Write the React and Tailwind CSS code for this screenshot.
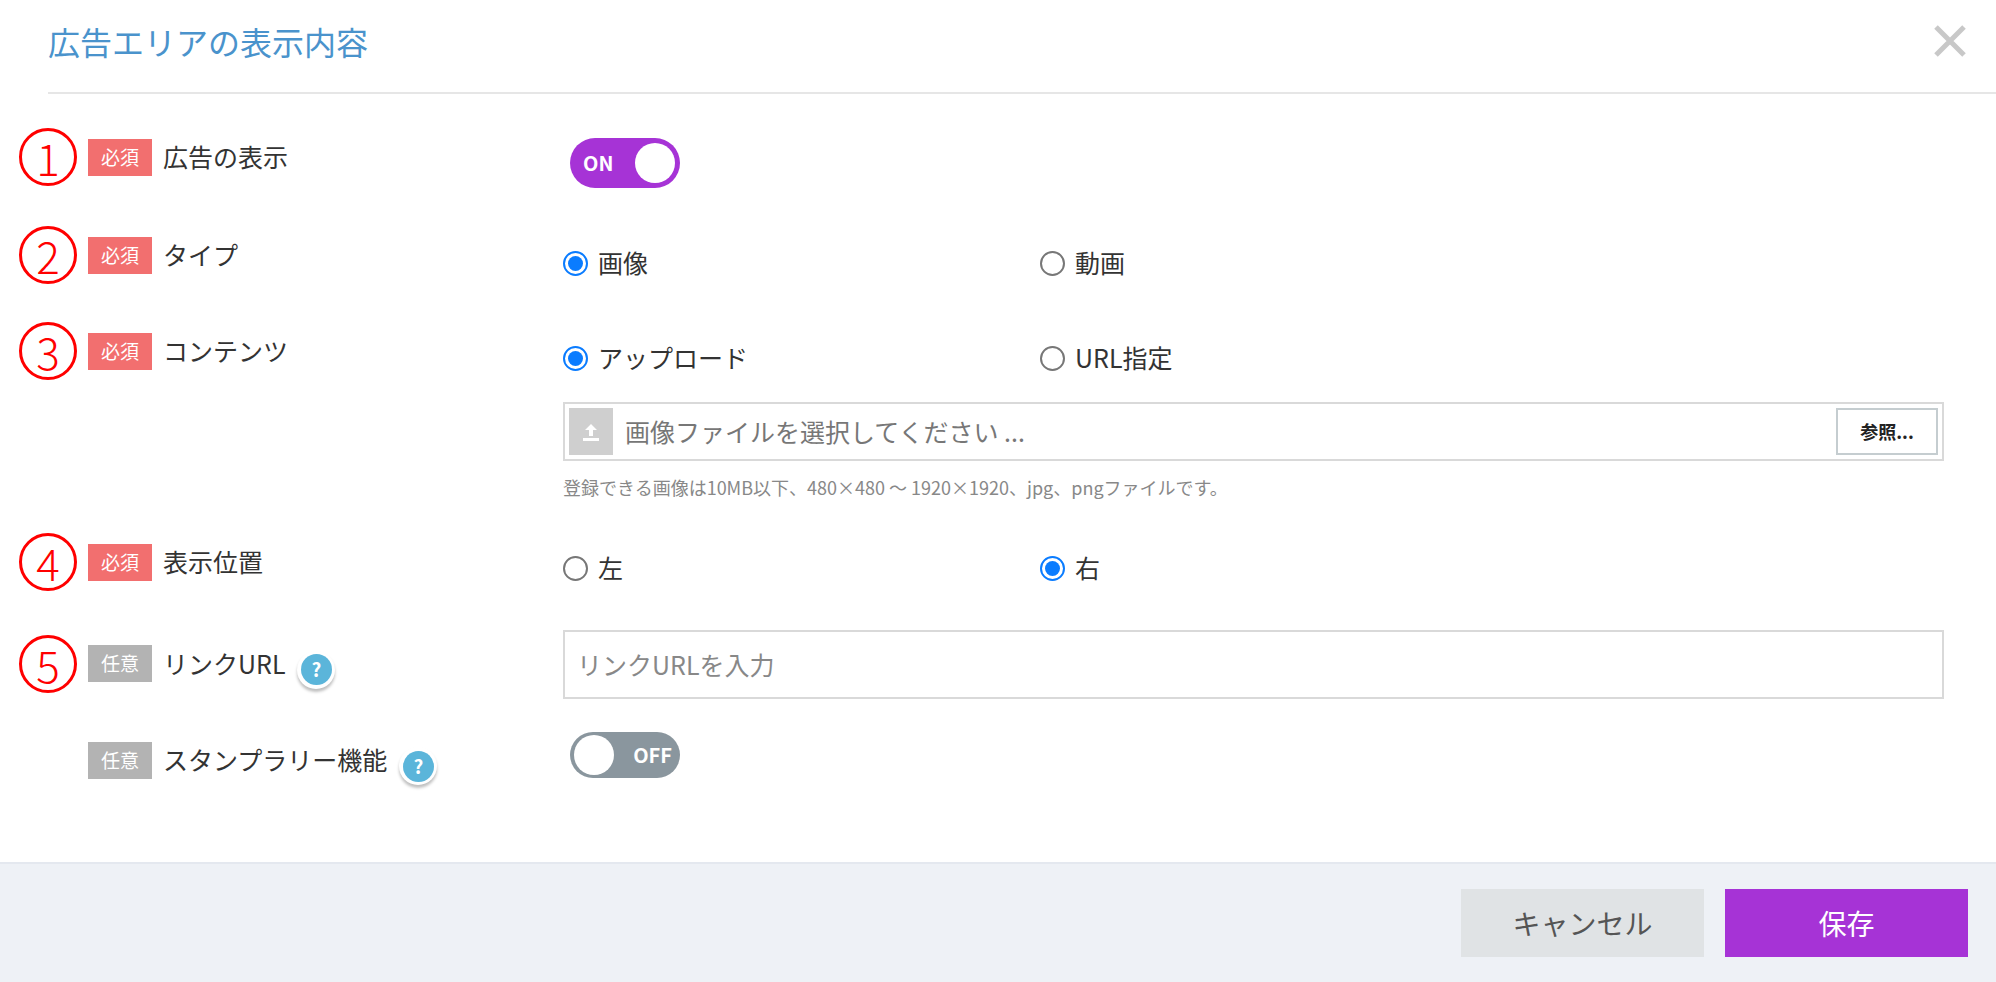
import React from "react";

const F = { fontFamily: '"Noto Sans CJK JP", "Noto Sans", sans-serif' };

function Num({ n }) {
  return (
    <div className="w-[58px] h-[58px] rounded-full border-[3px] border-[#ff0000] text-[#ff0000] flex items-center justify-center text-[44px] leading-none font-light shrink-0">
      {n}
    </div>
  );
}
function Badge({ req }) {
  return (
    <span className={`w-[64px] h-[37px] flex items-center justify-center text-white text-[19px] shrink-0 ${req ? "bg-[#f26f6f]" : "bg-[#b3b3b3]"}`}>
      {req ? "必須" : "任意"}
    </span>
  );
}
function Help() {
  return (
    <span className="w-[38px] h-[38px] rounded-full bg-white shadow-[0_3px_3px_rgba(0,0,0,0.25)] flex items-center justify-center ml-3 mt-3">
      <span className="w-[31px] h-[31px] rounded-full bg-[#5bb5da] text-white text-[19px] font-bold flex items-center justify-center">?</span>
    </span>
  );
}
function Label({ n, req, text, help, cls }) {
  return (
    <div className={`w-[515px] flex items-center ${cls}`}>
      <div className="w-[78px] flex justify-start pl-[19px]">{n ? <Num n={n} /> : null}</div>
      <div className="ml-[10px] flex items-center">
        <Badge req={req} />
        <span className="ml-[11px] text-[25px] text-[#333]">{text}</span>
        {help && <Help />}
      </div>
    </div>
  );
}
function Radio({ on, text }) {
  return (
    <div className="flex items-center w-[477px]">
      {on ? (
        <span className="w-[25px] h-[25px] rounded-full border-[2px] border-[#0a7cff] flex items-center justify-center">
          <span className="w-[15px] h-[15px] rounded-full bg-[#0a7cff]" />
        </span>
      ) : (
        <span className="w-[25px] h-[25px] rounded-full border-[2px] border-[#777]" />
      )}
      <span className="ml-[10px] text-[25px] text-[#333]">{text}</span>
    </div>
  );
}

export default function App() {
  return (
    <div style={F} className="w-[1996px] h-[982px] bg-white flex flex-col">
      <div className="ml-[48px] h-[94px] border-b-2 border-[#e6e6e6] flex items-center justify-between pr-[28px] pb-[10px]">
        <span className="text-[32px] text-[#4a93cc]">広告エリアの表示内容</span>
        <svg width="36" height="36" viewBox="0 0 36 36"><path d="M4 4L32 32M32 4L4 32" stroke="#c8c8c8" strokeWidth="5" /></svg>
      </div>
      <div className="flex-1 flex flex-col pt-[24px]">
        <div className="h-[90px] flex items-center">
          <Label n="1" req text="広告の表示" cls="mb-[12px]" />
          <div className="ml-[55px] w-[110px] h-[50px] rounded-full bg-[#a633d6] flex items-center justify-between pl-[13px] pr-[5px]">
            <span className="text-white text-[20px] font-bold">ON</span>
            <span className="w-[40px] h-[40px] rounded-full bg-white" />
          </div>
        </div>
        <div className="h-[110px] flex items-center">
          <Label n="2" req text="タイプ" cls="mb-[16px]" />
          <div className="ml-[48px] flex"><Radio on text="画像" /><Radio text="動画" /></div>
        </div>
        <div className="h-[80px] flex items-center">
          <Label n="3" req text="コンテンツ" cls="mb-[14px]" />
          <div className="ml-[48px] flex"><Radio on text="アップロード" /><Radio text="URL指定" /></div>
        </div>
        <div className="ml-[563px] w-[1381px] mt-[4px] h-[59px] border-2 border-[#d9d9d9] flex items-center p-[4px]">
          <span className="w-[44px] h-full bg-[#cfcfcf] flex items-center justify-center">
            <svg width="22" height="22" viewBox="0 0 22 22"><path d="M11 3L5 9H9V15H13V9H17Z" fill="#fff" /><rect x="3" y="17" width="16" height="3" fill="#fff" /></svg>
          </span>
          <span className="ml-[12px] flex-1 text-[25px] text-[#777]">画像ファイルを選択してください ...</span>
          <span className="h-full w-[102px] border-2 border-[#c5cdd0] flex items-center justify-center text-[18px] font-bold text-[#222]">参照...</span>
        </div>
        <div className="ml-[563px] mt-[16px] text-[18px] text-[#888] leading-[20px]">
          登録できる画像は10MB以下、480×480 ～ 1920×1920、jpg、pngファイルです。
        </div>
        <div className="mt-[21px] h-[100px] flex items-center">
          <Label n="4" req text="表示位置" cls="mb-[12px]" />
          <div className="ml-[48px] flex"><Radio text="左" /><Radio on text="右" /></div>
        </div>
        <div className="h-[93px] flex items-center">
          <Label n="5" text="リンクURL" help cls="mb-[2px]" />
          <div className="ml-[48px] w-[1381px] h-[69px] border-2 border-[#d9d9d9] flex items-center px-[12px] text-[25px] text-[#888]">リンクURLを入力</div>
        </div>
        <div className="h-[88px] flex items-center">
          <Label text="スタンプラリー機能" help cls="mt-[10px]" />
          <div className="ml-[55px] w-[110px] h-[46px] rounded-full bg-[#8a969e] flex items-center justify-between pl-[4px] pr-[8px]">
            <span className="w-[40px] h-[40px] rounded-full bg-white" />
            <span className="text-white text-[20px] font-bold">OFF</span>
          </div>
        </div>
      </div>
      <div className="h-[120px] bg-[#eef1f6] border-t-2 border-[#e4e8ef] flex items-center justify-end pr-[28px] gap-[21px]">
        <button className="w-[243px] h-[68px] bg-[#e0e3e5] text-[28px] text-[#555]">キャンセル</button>
        <button className="w-[243px] h-[68px] bg-[#a633d6] text-[28px] text-white">保存</button>
      </div>
    </div>
  );
}
